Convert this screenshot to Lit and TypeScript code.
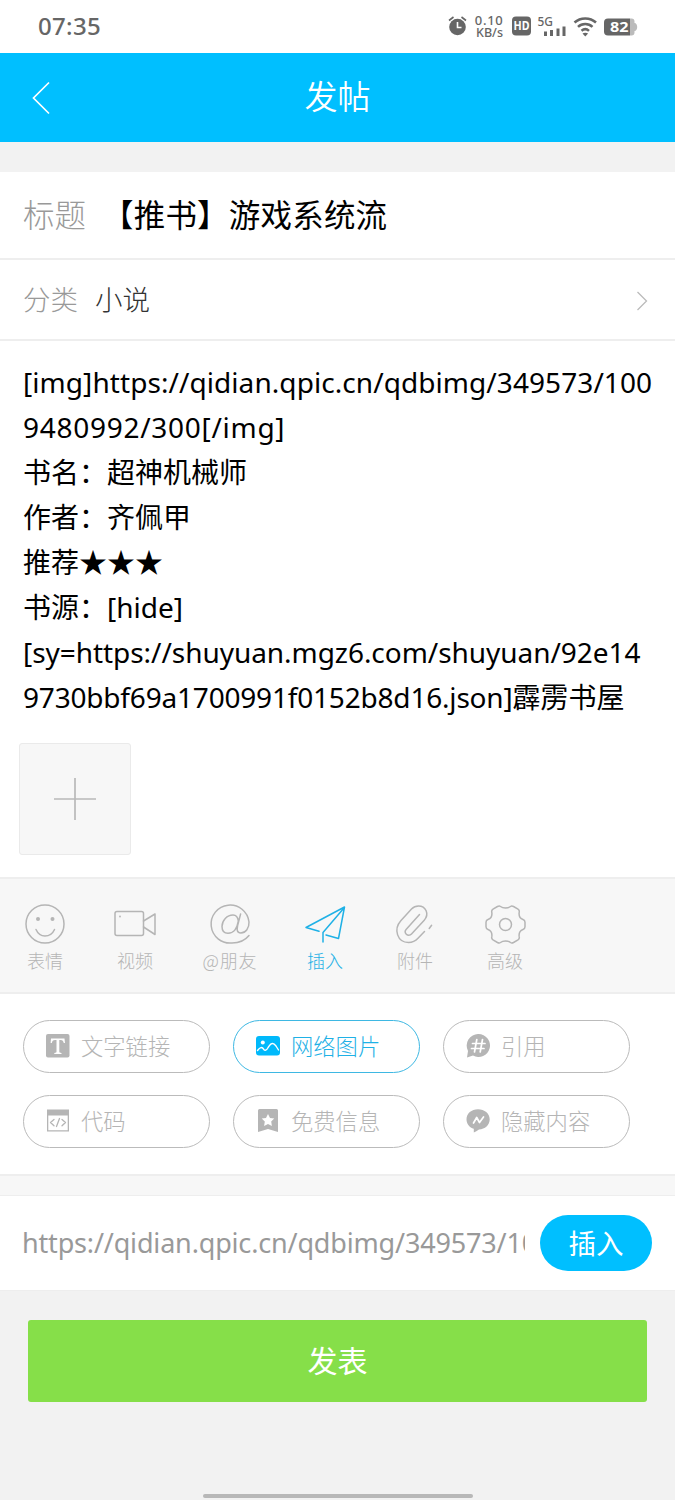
import { LitElement, html, css, svg, TemplateResult } from "lit";
import { customElement, property, state } from "lit/decorators.js";
import { classMap } from "lit/directives/class-map.js";

const toolIcons: Record<string, TemplateResult> = {
  face: svg`<circle cx="22" cy="22" r="19"/><path d="M13 27.5c2 4.500 5 6.500 9 6.500s7.500-2 9.500-6.500"/><circle class="dot" cx="15" cy="17" r="2"/><circle class="dot" cx="29.500" cy="17" r="2"/>`,
  video: svg`<rect x="2" y="9.500" width="28.500" height="24" rx="2"/><path d="M30.500 19 42 12v20.500L30.500 25"/><circle class="dot" cx="7" cy="14.500" r=".9"/>`,
  at: svg`<path d="M41 33.500C37 38.500 31 41 24 41A19 19 0 1 1 41 20c.3 6-3.200 11-8.200 11-4 0-4-3.500-3.200-7.500l3-11.500M30.300 19c-.5-4-2.500-6-5.300-6-6 0-11 5.500-11 11.500 0 4.300 2.500 6.800 6 6.800 5 0 9-4.500 10.300-12.300"/>`,
  plane: svg`<path d="M16 29.300 3 25.500 41.500 5 35.500 36.500 23 33M20 40v-9.500L41 6"/>`,
  clip: svg`<path d="M26.500 12.500 13.300 27.200c-1.500 1.700-1.300 3.700 0 5s3.700 1.500 5.200-.2L31 18.500c6-6.500 1.500-14.500-5.500-14.500-3 0-5 1-7 3L8 18.500C0 27.500 4.500 40.500 15.500 40.500c4.500 0 7-1.500 9.500-4.200l6.500-6.800M36.200 26.500l2.400-3.200"/>`,
  gear: svg`<circle cx="22.500" cy="22.500" r="6"/><path d="M17.500 4.500c2.500 2 7.500 2 10 0 1-.7 2-.5 3 0l4.500 2.600c1.200.8 1.500 2 1.200 3.200-.5 3.500.5 6 3.800 7.200 1.300.5 2 1.400 2 2.700v4.600c0 1.300-.7 2.200-2 2.700-3.300 1.200-4.300 3.700-3.800 7.200.3 1.200 0 2.400-1.200 3.200l-4.500 2.600c-1 .5-2 .7-3 0-2.500-2-7.500-2-10 0-1 .7-2 .5-3 0L10 37.900c-1.200-.8-1.500-2-1.200-3.200.5-3.500-.5-6-3.800-7.200-1.300-.5-2-1.400-2-2.700v-4.600c0-1.300.7-2.200 2-2.700 3.300-1.200 4.300-3.700 3.800-7.200-.3-1.200 0-2.400 1.200-3.200l4.500-2.600c1-.5 2-.7 3 0Z"/>`,
};

const pillIcons: Record<string, TemplateResult> = {
  text: svg`<rect x="0" y="0" width="23.500" height="23.500" rx="2"/><path class="cut" d="M5 4.500h13.500l.5 4.500h-1.200c-.5-2-1.300-3-3-3h-1.500v11.500c0 1 .6 1.300 2.200 1.400v1H8.300v-1c1.600-.1 2.200-.4 2.200-1.400V6H9C7 6 6.200 7 5.800 9H4.600Z"/>`,
  image: svg`<rect x="0" y="2" width="24" height="19.500" rx="3"/><circle class="cut" cx="6.800" cy="8.500" r="2"/><path class="stroke" d="M1.500 16.500c2.500-3.500 4.500-4 6.500-.8 1 1 2.500.5 3.500-1.200 3-5.500 5.500-6.500 8.500-2.500l2.500 4"/>`,
  quote: svg`<path d="M12.500 0A11.500 11.500 0 1 1 7 21.600L1 23.500l1-6.500A11.600 11.600 0 0 1 12.500 0Z"/><path class="stroke hash" d="M10.800 5.500 8.500 18M16.500 5.500 14.200 18M6.500 9.500h12.500M5.500 14.500H18"/>`,
  code: svg`<path fill-rule="evenodd" d="M1 .5h22v22H1Zm1.300 6v14.700h19.400V6.500Z"/><path class="line" d="m8 10.500-3.500 3L8 16.800M16 10.500l3.500 3-3.500 3.300M13.500 9.500l-3 8"/>`,
  bookmark: svg`<path d="M3.500 0h17A1.500 1.500 0 0 1 22 1.500V23l-10-3-10 3V1.500A1.500 1.500 0 0 1 3.500 0Z"/><path class="cut" d="m12 5 2 4 4.300.6-3.100 3 .7 4.400-3.900-2.100-3.900 2.100.7-4.400-3.100-3L10 9Z"/>`,
  hidden: svg`<path d="M12 .3c6.500 0 11.700 4.200 11.700 10S19 20.300 13 20.400c-2 1.200-3.500 2.300-5.200 3.200v-3.800C3.500 18.500.5 15 .5 10.300.5 4.500 5.500.3 12 .3Z"/><path class="stroke hash" d="m7.500 14 3.200-5.500 2.800 5 4-5.500"/>`,
};

@customElement("status-bar")
class StatusBar extends LitElement {
  static styles = css`
    :host { display: flex; height: 52.5px; padding: 0 37px 0 38px; align-items: center; justify-content: space-between; box-sizing: border-box; background: #fff; color: #666; }
    .time { font: 500 24px/50px "Noto Sans", sans-serif; letter-spacing: 0.3px; }
    .icons { display: block; width: 192px; height: 30px; }
    text { font-family: "Noto Sans", sans-serif; fill: #666; font-weight: 500; }
    .badge { fill: #fff; font-weight: 700; }
    .outline { fill: none; stroke: #666; stroke-width: 2.500; }
  `;
  render() {
    return html`
      <span class="time">07:35</span>
      <svg class="icons" viewBox="0 0 192 30" fill="#666">
        <circle cx="11.500" cy="16" r="8.300"/>
        <path d="M3 9.500 7.500 6M15.500 6 20 9.500" fill="none" stroke="#666" stroke-width="1.600"/>
        <path d="M11.500 11v5.500h4" fill="none" stroke="#fff" stroke-width="1.600"/>
        <text x="28.800" y="13.800" font-size="13" textLength="28">0.10</text>
        <text x="30" y="26" font-size="12" textLength="27" lengthAdjust="spacingAndGlyphs">KB/s</text>
        <rect x="66" y="5.500" width="19" height="19" rx="4"/>
        <text class="badge" x="67.500" y="19.300" font-size="12" textLength="16" lengthAdjust="spacingAndGlyphs">HD</text>
        <text x="91.500" y="15" font-size="12.500" textLength="15.500" lengthAdjust="spacingAndGlyphs">5G</text>
        <path d="M98 20.500h3v4.500h-3ZM104 19h3v6h-3ZM110.500 17.500h3v7.500h-3ZM116.500 15.500h3v9.500h-3Z"/>
        <g class="outline"><path d="M128.500 11.500c6-5.500 15.500-5.500 21.500 0M132 15.800c4-3.800 10.500-3.800 14.500 0M135.500 19.800c2.300-2 5.300-2 7.500 0"/></g>
        <path d="m136.500 22.500 2.800 3 2.800-3c-1.500-1-4-1-5.600 0Z"/>
        <path d="M162 7.500h22v17h-22a4 4 0 0 1-4-4v-9a4 4 0 0 1 4-4Z"/>
        <path fill="#bbb" d="M184 7.500h1.500a3 3 0 0 1 3 3v1.500c1.700 0 2.700 2 2.700 4s-1 4-2.700 4v1.500a3 3 0 0 1-3 3H184Z"/>
        <text class="badge" x="164" y="21.300" font-size="15" textLength="18.500" lengthAdjust="spacingAndGlyphs">82</text>
      </svg>`;
  }
}

@customElement("tool-item")
class ToolItem extends LitElement {
  @property() icon = "";
  @property() label = "";
  static styles = css`
    :host { display: flex; flex-direction: column; align-items: center; color: #b5b5b5; }
    svg { display: block; width: 44px; height: 44px; fill: none; stroke: currentColor; stroke-width: 1.500; stroke-linecap: round; stroke-linejoin: round; overflow: visible; }
    .dot { fill: currentColor; stroke: none; }
    .label { font: 300 18px/26px "Noto Sans CJK SC", sans-serif; margin-top: 1px; white-space: nowrap; }
    :host(.wide) .label { letter-spacing: 0.8px; }
  `;
  render() {
    return html`<svg viewBox="0 0 44 44">${toolIcons[this.icon]}</svg><span class="label">${this.label}</span>`;
  }
}

@customElement("insert-pill")
class InsertPill extends LitElement {
  @property() icon = "";
  @property() label = "";
  static styles = css`
    :host { display: flex; align-items: center; gap: 11px; height: 52.5px; padding-left: 22.5px; box-sizing: border-box; border: 1px solid #bbb; border-radius: 27px; color: #b5b5b5; }
    svg { display: block; width: 24px; height: 24px; fill: currentColor; flex: none; }
    :host(.active) svg { fill: #00b9fb; }
    .cut { fill: #fff; }
    .stroke, .line { fill: none; stroke: #fff; stroke-width: 1.400; stroke-linecap: round; stroke-linejoin: round; }
    .hash { stroke-width: 1.700; }
    .line { stroke: currentColor; stroke-width: 1.300; }
    .label { font: 300 22.3px/48px "Noto Sans CJK SC", sans-serif; height: 50px; white-space: nowrap; }
  `;
  render() {
    return html`<svg viewBox="0 0 24 24">${pillIcons[this.icon]}</svg><span class="label">${this.label}</span>`;
  }
}

@customElement("app-root")
class AppRoot extends LitElement {
  @state() private tool = "plane";
  @state() private insert = "image";

  private tools = [
    ["face", "表情"], ["video", "视频"], ["at", "@朋友"],
    ["plane", "插入"], ["clip", "附件"], ["gear", "高级"],
  ];
  private inserts = [
    ["text", "文字链接"], ["image", "网络图片"], ["quote", "引用"],
    ["code", "代码"], ["bookmark", "免费信息"], ["hidden", "隐藏内容"],
  ];

  static styles = css`
    :host { display: flex; flex-direction: column; width: 675px; height: 1500px; overflow: hidden; background: #f2f2f2; font-family: "Noto Sans", "Noto Sans CJK SC", sans-serif; font-weight: 400; }
    * { box-sizing: border-box; }
    .header { display: grid; grid-template-columns: 80px 1fr 80px; align-items: center; height: 89.5px; background: #00bfff; color: #fff; flex: none; }
    .back { width: 20px; height: 34px; margin-left: 32px; fill: none; stroke: #fff; stroke-width: 1.700; }
    .heading { height: 90px; font: 350 33px/85px "Noto Sans CJK SC", sans-serif; text-align: center; }
    .title { display: flex; align-items: center; height: 88px; margin-top: 30px; padding: 0 23px 5px; border-bottom: 2px solid #eee; background: #fff; font-family: "Noto Sans CJK SC", sans-serif; font-size: 31.5px; line-height: 80px; flex: none; }
    .name { color: #999; font-weight: 300; }
    .title .value { margin-left: 16px; color: #000; letter-spacing: 0.2px; }
    .category { display: flex; align-items: center; height: 81px; padding: 0 27px 0 23px; border-bottom: 2px solid #eee; background: #fff; font-family: "Noto Sans CJK SC", sans-serif; font-size: 27.5px; flex: none; }
    .category span { line-height: 77px; height: 79px; }
    .category .value { margin-left: 17px; color: #333; font-weight: 300; flex: 1; }
    .chevron { width: 12px; height: 20px; margin-top: 3px; fill: none; stroke: #bbb; stroke-width: 1.300; }
    .editor { height: 538px; padding: 19px 19px 0; background: #fff; border-bottom: 2px solid #eee; flex: none; }
    .body { padding-left: 4px; font-size: 28px; line-height: 45px; color: #000; white-space: nowrap; }
    .l1 { letter-spacing: 0.07px; }
    .l2 { letter-spacing: 0.72px; }
    .l7 { letter-spacing: -0.05px; }
    .tail { letter-spacing: -0.19px; }
    .add { display: flex; align-items: center; justify-content: center; width: 112px; height: 112px; margin-top: 23px; border: 1px solid #eaeaea; border-radius: 3px; background: #f7f7f7; }
    .add svg { width: 44px; height: 44px; stroke: #b9b9b9; stroke-width: 1.700; }
    .tools { display: flex; height: 115px; padding-top: 23px; background: #f7f7f7; border-bottom: 2px solid #eee; flex: none; }
    tool-item { width: 90px; }
    tool-item.wide { width: 100px; }
    .active { color: #1fb1e6; }
    .pills { display: grid; grid-template-columns: repeat(3, 187.5px); gap: 22.5px; align-content: start; height: 182px; padding: 26px 22.5px 0; background: #fff; border-bottom: 2px solid #eee; flex: none; }
    insert-pill.active { border-color: #3eb8e3; color: #1fb1e6; }
    .strip { height: 20px; background: #f7f7f7; border-bottom: 1px solid #eee; flex: none; }
    .link { display: flex; align-items: center; height: 95px; padding: 0 23px 0 22px; background: #fff; border-bottom: 1px solid #eee; flex: none; }
    .url { width: 503px; overflow: hidden; color: #999; font-size: 27px; line-height: 58px; letter-spacing: -0.17px; white-space: nowrap; }
    .go { width: 112px; height: 56px; margin-left: auto; border-radius: 28px; background: #00bfff; color: #fff; text-align: center; font: 400 27.5px/54px "Noto Sans CJK SC", sans-serif; }
    .publish { height: 82px; margin: 29px 28px 0; border-radius: 3px; background: #86df49; color: #fff; text-align: center; font: 400 30px/79px "Noto Sans CJK SC", sans-serif; flex: none; }
    .home { width: 270px; height: 4px; margin: auto auto 2px 202.5px; border-radius: 2px; background: #b8b8b8; }
  `;

  render() {
    return html`
      <status-bar></status-bar>
      <div class="header">
        <svg class="back" viewBox="0 0 20 34"><path d="M17 1.500 1.500 17 17 32.500"/></svg>
        <span class="heading">发帖</span>
      </div>
      <div class="title"><span class="name">标题</span><span class="value">【推书】游戏系统流</span></div>
      <div class="category">
        <span class="name">分类</span><span class="value">小说</span>
        <svg class="chevron" viewBox="0 0 12 20"><path d="m1.500 1 9 9-9 9"/></svg>
      </div>
      <div class="editor">
        <div class="body">
          <div class="l1">[img]https://qidian.qpic.cn/qdbimg/349573/100</div>
          <div class="l2">9480992/300[/img]</div>
          <div>书名：超神机械师</div>
          <div>作者：齐佩甲</div>
          <div>推荐★★★</div>
          <div>书源：[hide]</div>
          <div class="l7">[sy=https://shuyuan.mgz6.com/shuyuan/92e14</div>
          <div><span class="tail">9730bbf69a1700991f0152b8d16.json]</span>霹雳书屋</div>
        </div>
        <div class="add"><svg viewBox="0 0 44 44"><path d="M22 1v42M1 22h42"/></svg></div>
      </div>
      <div class="tools">
        ${this.tools.map(([id, label]) => html`<tool-item
          class=${classMap({ wide: id === "at", active: id === this.tool })}
          .icon=${id} .label=${label} @click=${() => (this.tool = id)}></tool-item>`)}
      </div>
      <div class="pills">
        ${this.inserts.map(([id, label]) => html`<insert-pill
          class=${classMap({ active: id === this.insert })}
          .icon=${id} .label=${label} @click=${() => (this.insert = id)}></insert-pill>`)}
      </div>
      <div class="strip"></div>
      <div class="link"><div class="url">https://qidian.qpic.cn/qdbimg/349573/1009480992</div><div class="go">插入</div></div>
      <div class="publish">发表</div>
      <div class="home"></div>`;
  }
}
